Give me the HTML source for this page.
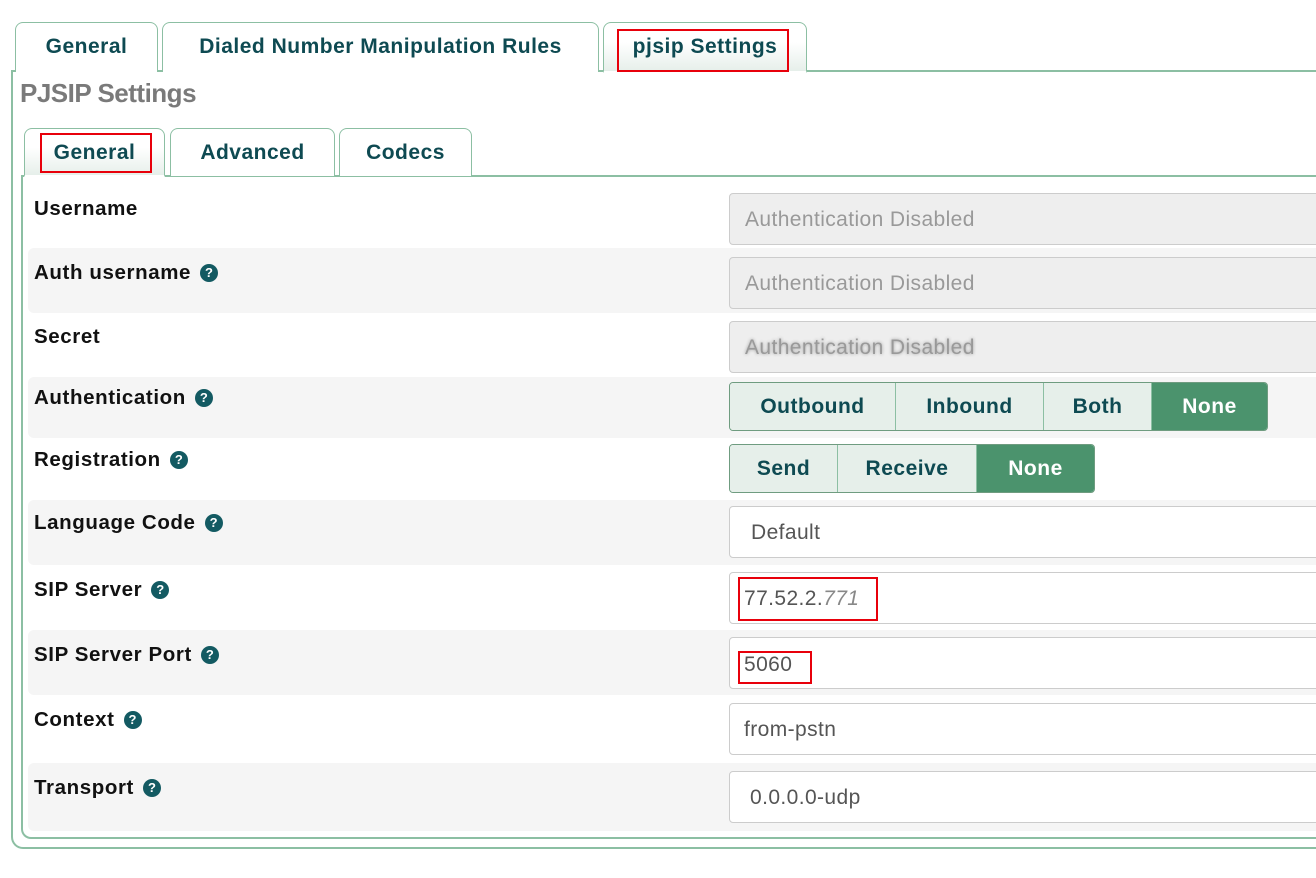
<!DOCTYPE html>
<html><head><meta charset="utf-8"><style>
*{box-sizing:border-box;margin:0;padding:0}
body{width:1316px;height:878px;background:#fff;position:relative;overflow:hidden;font-family:"Liberation Sans",Arial,sans-serif}
.a{position:absolute}
.tab{position:absolute;border:1px solid #8cbfa3;border-bottom:none;border-radius:8px 8px 0 0;background:#fff;color:#0e4a52;font-weight:bold;font-size:21px;text-align:center;letter-spacing:0.5px;white-space:nowrap}
.act{background:linear-gradient(#fff 40%,#e6efea)}
.red{position:absolute;border:2px solid #e8000b}
.row{position:absolute;left:28px;width:1300px;border-radius:6px}
.g{background:#f5f5f5}
.lbl{position:absolute;left:34px;font-weight:bold;font-size:20.5px;color:#111;letter-spacing:0.6px;white-space:nowrap}
.q{display:inline-block;width:18px;height:18px;border-radius:50%;background:#135a62;color:#fff;font-size:13px;line-height:18px;text-align:center;vertical-align:2px;margin-left:9px;letter-spacing:0}
.inp{position:absolute;left:729px;width:600px;height:52px;border:1px solid #ccc;border-radius:4px;background:#fff;font-size:21px;color:#555;padding-left:15px;line-height:52px;letter-spacing:0.4px}
.dis{background:#eee;color:#999}
.bg{position:absolute;left:729px;height:49px;display:flex;border:1px solid #6f9c80;border-radius:4px;overflow:hidden}
.bg div{background:#e6efea;color:#0e4a52;font-weight:bold;font-size:21px;text-align:center;line-height:47px;border-right:1px solid #8cbfa3;letter-spacing:0.5px}
.bg div.on{background:#4b936d;color:#fff;border-right:none}
</style></head><body>
<div class="a" style="left:11px;top:70px;width:1320px;height:779px;border:2px solid #8cbfa3;border-right:none;border-radius:0 0 0 12px"></div>
<div class="tab" style="left:15px;top:22px;width:143px;height:50px;line-height:48px">General</div>
<div class="tab" style="left:162px;top:22px;width:437px;height:50px;line-height:48px">Dialed Number Manipulation Rules</div>
<div class="tab act" style="left:603px;top:22px;width:204px;height:51px;line-height:48px;border-bottom:2px solid #fff">pjsip Settings</div>
<div class="red" style="left:617px;top:29px;width:172px;height:43px"></div>
<div class="a" style="left:20px;top:78px;font-size:26px;font-weight:bold;color:#7a7a7a;letter-spacing:-0.5px">PJSIP Settings</div>
<div class="a" style="left:21px;top:175px;width:1310px;height:664px;border:2px solid #8cbfa3;border-right:none;border-radius:0 0 0 10px"></div>
<div class="tab act" style="left:24px;top:128px;width:141px;height:49px;line-height:48px;border-bottom:2px solid #fff">General</div>
<div class="red" style="left:40px;top:133px;width:112px;height:40px"></div>
<div class="tab" style="left:170px;top:128px;width:165px;height:48px;line-height:48px">Advanced</div>
<div class="tab" style="left:339px;top:128px;width:133px;height:48px;line-height:48px">Codecs</div>

<div class="row g" style="top:248px;height:65px"></div>
<div class="row g" style="top:377px;height:61px"></div>
<div class="row g" style="top:500px;height:65px"></div>
<div class="row g" style="top:630px;height:65px"></div>
<div class="row g" style="top:763px;height:68px"></div>

<div class="lbl" style="top:197px">Username</div>
<div class="lbl" style="top:261px">Auth username<span class="q">?</span></div>
<div class="lbl" style="top:325px">Secret</div>
<div class="lbl" style="top:386px">Authentication<span class="q">?</span></div>
<div class="lbl" style="top:448px">Registration<span class="q">?</span></div>
<div class="lbl" style="top:511px">Language Code<span class="q">?</span></div>
<div class="lbl" style="top:578px">SIP Server<span class="q">?</span></div>
<div class="lbl" style="top:643px">SIP Server Port<span class="q">?</span></div>
<div class="lbl" style="top:708px">Context<span class="q">?</span></div>
<div class="lbl" style="top:776px">Transport<span class="q">?</span></div>

<div class="inp dis" style="top:193px">Authentication Disabled</div>
<div class="inp dis" style="top:257px">Authentication Disabled</div>
<div class="inp dis" style="top:321px;text-shadow:0 0 3px #999">Authentication Disabled</div>
<div class="bg" style="top:382px"><div style="width:166px">Outbound</div><div style="width:148px">Inbound</div><div style="width:108px">Both</div><div class="on" style="width:115px">None</div></div>
<div class="bg" style="top:444px"><div style="width:108px">Send</div><div style="width:139px">Receive</div><div class="on" style="width:117px">None</div></div>
<div class="inp" style="top:506px;padding-left:21px">Default</div>
<div class="inp" style="top:572px;padding-left:14px">77.52.2.<i style="color:#888">771</i></div>
<div class="red" style="left:738px;top:577px;width:140px;height:44px"></div>
<div class="inp" style="top:637px;padding-left:14px;line-height:54px">5060</div>
<div class="red" style="left:738px;top:651px;width:74px;height:33px"></div>
<div class="inp" style="top:703px;padding-left:14px">from-pstn</div>
<div class="inp" style="top:771px;padding-left:20px">0.0.0.0-udp</div>
</body></html>
